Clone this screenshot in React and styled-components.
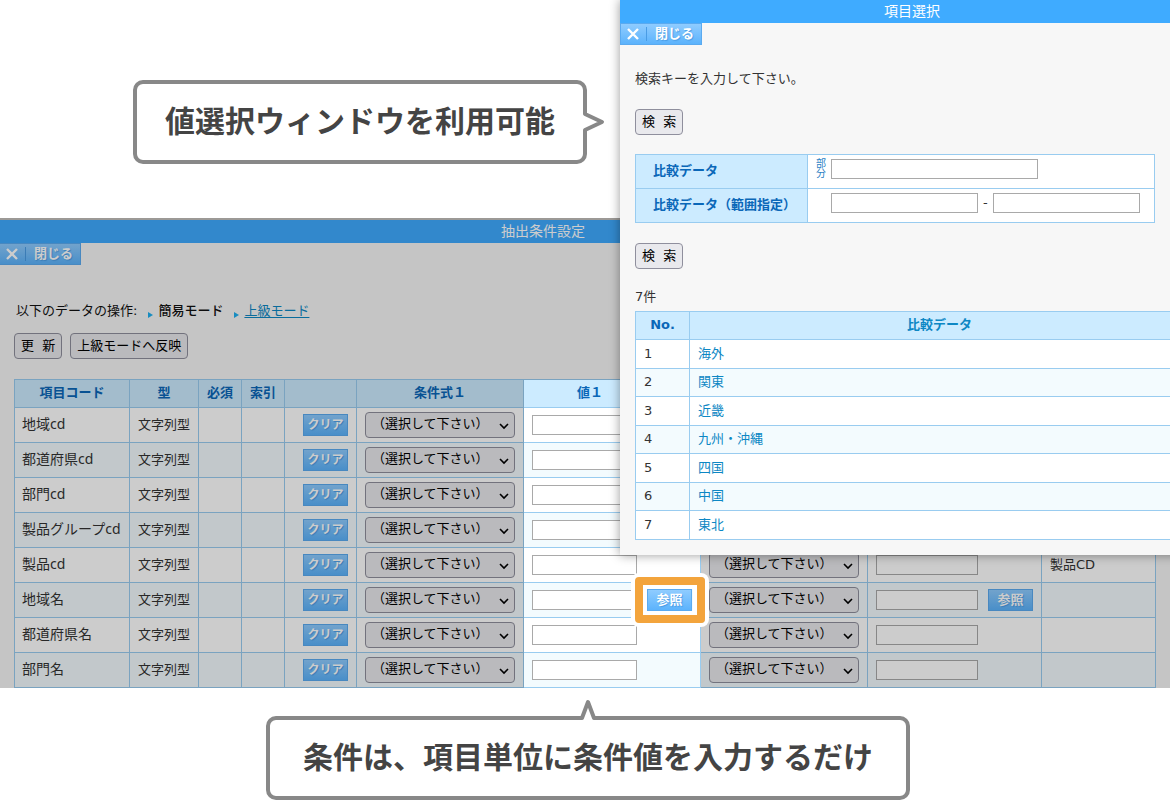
import React from 'react';
import styled, { createGlobalStyle, css } from 'styled-components';

const GlobalStyle = createGlobalStyle`
  *, *::before, *::after { box-sizing: border-box; }
  body {
    margin: 0;
    background: #fff;
    color: #333;
    font-family: "DejaVu Sans", "Noto Sans CJK JP", sans-serif;
    font-size: 13px;
    line-height: 20px;
  }
  button, input, select { font: inherit; }
`;

const color = {
  bar: '#3fabff',
  page: '#f7f7f7',
  line: '#99ccf0',
  head: '#ccebff',
  stripe: '#f3fbfe',
  heading: '#0a67b8',
  link: '#0d87c4',
  bubble: '#888',
};

const Page = styled.main`
  position: relative;
  overflow: hidden;
`;

/* Speech bubbles */
const TopNote = styled.div`
  display: flex;
  padding: 80px 0 54px 133px;
`;

const BottomNote = styled.div`
  display: flex;
  justify-content: center;
  padding: 28px 0 0 6px;
`;

const Bubble = styled.p`
  position: relative;
  margin: 0;
  height: 84px;
  padding: 0 ${(p) => (p.$wide ? 33 : 28)}px;
  border: 4px solid ${color.bubble};
  border-radius: 10px;
  background: #fff;
  color: #444;
  font-family: "Noto Sans CJK JP", sans-serif;
  font-size: 30px;
  font-weight: 700;
  line-height: 71px;
  white-space: nowrap;
`;

const Tail = styled.svg`
  position: absolute;
  overflow: visible;
  ${(p) =>
    p.$side === 'right'
      ? css`
          left: 100%;
          top: 26px;
        `
      : css`
          left: calc(50% - 12px);
          bottom: 100%;
        `}
`;

/* Windows */
const Window = styled.section`
  position: relative;
  isolation: isolate;
  background: ${color.page};
`;

const SettingsWindow = styled(Window)`
  border-top: 2px solid #c4c0bc;
`;

const Shade = styled.div`
  position: absolute;
  inset: -2px 0 0;
  z-index: 1;
  background: rgba(0, 0, 0, 0.2);
  pointer-events: none;
`;

const PickerWindow = styled(Window)`
  position: absolute;
  top: 0;
  left: 53%;
  right: -34px;
  z-index: 3;
  padding-bottom: 15px;
  box-shadow: 0 0 10px rgba(0, 0, 0, 0.4);
`;

const TitleBar = styled.h2`
  margin: 0;
  height: 23px;
  padding-right: ${(p) => (p.$offset ? 84 : 0)}px;
  background: ${color.bar};
  color: #fff;
  font-size: 14px;
  font-weight: 400;
  line-height: 22px;
  text-align: center;
`;

const glossy = css`
  border: 1px solid #5aaaf0;
  background: linear-gradient(#8fccff, #5cb3fc);
  color: #fff;
  font-weight: 700;
  text-shadow: 1px 1px 1px #4a9ce4;
  white-space: nowrap;
`;

const CloseButton = styled.button`
  ${glossy}
  display: flex;
  align-items: center;
  width: 82px;
  height: 22px;
  margin-left: ${(p) => (p.$flush ? -1 : 0)}px;
  padding: 0 0 0 6px;
  line-height: 18px;
`;

const CloseLabel = styled.span`
  margin-left: 7px;
  padding-left: 8px;
  border-left: 1px solid #4a9ce4;
  line-height: 14px;
`;

const MiniButton = styled.button`
  ${glossy}
  position: relative;
  flex: none;
  width: 45px;
  height: 22px;
  padding: 0;
  font-size: ${(p) => (p.$small ? 12 : 13)}px;
  line-height: 18px;
  ${(p) =>
    p.$marked &&
    css`
      &::after {
        content: '';
        position: absolute;
        inset: -13px -14px -13px -13px;
        border: 8px solid #f3a43c;
        border-radius: 4px;
        box-shadow: 0 0 0 4px #fff, inset 0 0 0 4px #fff;
      }
    `}
`;

const PlainButton = styled.button`
  height: 26px;
  padding: 0 6px;
  border: 1px solid #8f8f9d;
  border-radius: 4px;
  background: #e9e9ed;
  color: #000;
  line-height: 22px;
  white-space: pre;
`;

/* Settings window */
const SettingsBody = styled.div`
  padding: 36px 14px 0;
`;

const ModeLine = styled.div`
  display: flex;
  align-items: center;
  padding-left: 2px;
  color: #111;
`;

const ModeItem = styled.span`
  display: flex;
  align-items: center;
  gap: 5px;
  margin-left: 11px;
  font-weight: ${(p) => (p.$current ? 500 : 400)};
`;

const Marker = styled.svg`
  margin-top: 8px;
`;

const Link = styled.a`
  color: ${color.link};
  text-decoration: ${(p) => (p.$underlined ? 'underline' : 'none')};
  text-underline-offset: 2px;
`;

const ButtonRow = styled.div`
  display: flex;
  gap: 8px;
  padding: 12px 0 20px;
`;

const Grid = styled.table`
  width: ${(p) => p.$width || '100%'};
  table-layout: fixed;
  border-collapse: separate;
  border-spacing: 0;
  border: solid ${color.line};
  border-width: 1px 0 0 1px;
`;

const Head = styled.th`
  height: ${(p) => p.$height || 28}px;
  padding: ${(p) => p.$pad || '0 0 2px'};
  border: solid ${color.line};
  border-width: 0 1px 1px 0;
  background: ${color.head};
  color: ${(p) => (p.$link ? color.link : color.heading)};
  font-weight: 700;
  text-align: ${(p) => p.$align || 'center'};
  white-space: nowrap;
  ${(p) => p.$lit && 'position: relative; z-index: 2;'}
`;

const Row = styled.tr`
  background: #fff;
  &:nth-child(even) { background: ${color.stripe}; }
`;

const Cell = styled.td`
  height: 35px;
  padding: 0 0 0 8px;
  border: solid ${color.line};
  border-width: 0 1px 1px 0;
  background: inherit;
  white-space: nowrap;
  ${(p) => p.$lit && `position: relative; z-index: ${p.$raised ? 3 : 2};`}
`;

const NameCell = styled(Cell)`
  padding: 0 0 2px 7px;
  font-family: "Noto Sans", "Noto Sans CJK JP", sans-serif;
  font-size: 14px;
`;

const ClearCell = styled(Cell)`
  padding: 0 8px 0 0;
  text-align: right;
`;

const Inline = styled.div`
  display: flex;
  align-items: center;
  gap: 10px;
`;

const TextBox = styled.input`
  display: block;
  width: ${(p) => p.$width}px;
  height: 20px;
  padding: 0 4px;
  border: 1px solid #a9a9a9;
  background: #fff;
`;

const SelectBox = styled.div`
  position: relative;
  width: 150px;
  height: 26px;
`;

const Select = styled.select`
  appearance: none;
  width: 100%;
  height: 100%;
  padding: 0 20px 2px 6px;
  border: 1px solid #8f8f9d;
  border-radius: 4px;
  background: #e9e9ed;
  color: #000;
`;

const Chevron = styled.svg`
  position: absolute;
  top: 11px;
  right: 6px;
  pointer-events: none;
`;

/* Picker window */
const PickerBody = styled.div`
  padding: 24px 14px 0 15px;
`;

const Message = styled.p`
  margin: 0 0 20px;
`;

const FormTable = styled(Grid)`
  margin: 19px 0 20px;
`;

const FormCell = styled(Cell)`
  height: 34px;
  padding: 0 0 5px 8px;
  background: #fff;
`;

const FormFields = styled.div`
  display: flex;
  align-items: center;
  gap: 5px;
`;

const Match = styled.span`
  width: 10px;
  color: #2a7fc4;
  font-size: 10px;
  line-height: 10px;
  white-space: normal;
`;

const Count = styled.p`
  margin: 18px 0 4px;
`;

const ResultRow = styled(Row)`
  &:nth-child(odd) td { height: 29px; }
  &:nth-child(even) td { height: 28px; }
`;

const ResultCell = styled(Cell)`
  padding-bottom: 1px;
`;

const rows = [
  { name: '地域cd' },
  { name: '都道府県cd' },
  { name: '部門cd' },
  { name: '製品グループcd' },
  { name: '製品cd', note: '製品CD' },
  { name: '地域名', lookup: true },
  { name: '都道府県名' },
  { name: '部門名' },
];

const results = ['海外', '関東', '近畿', '九州・沖縄', '四国', '中国', '東北'];

const widths = [115, 69, 43, 43, 72, 167, 177, 167, 174, 114];

function Condition({ label }) {
  return (
    <SelectBox>
      <Select aria-label={label}>
        <option>（選択して下さい）</option>
      </Select>
      <Chevron width="10" height="7" viewBox="0 0 10 7" fill="none" stroke="#000" strokeWidth="1.6">
        <path d="M1 1L5 5L9 1" />
      </Chevron>
    </SelectBox>
  );
}

function Close({ flush }) {
  return (
    <CloseButton type="button" $flush={flush}>
      <svg width="12" height="12" viewBox="0 0 12 12" fill="none" stroke="#fff" strokeWidth="2.4">
        <path d="M1 1L11 11M11 1L1 11" />
      </svg>
      <CloseLabel>閉じる</CloseLabel>
    </CloseButton>
  );
}

function ModeMarker() {
  return (
    <Marker width="5" height="6" viewBox="0 0 5 6">
      <path d="M0 0L5 3L0 6Z" fill="#1fb0f0" />
    </Marker>
  );
}

function Settings() {
  return (
    <SettingsWindow>
      <TitleBar $offset>抽出条件設定</TitleBar>
      <Close flush />
      <SettingsBody>
        <ModeLine>
          以下のデータの操作:
          <ModeItem $current><ModeMarker />簡易モード</ModeItem>
          <ModeItem><ModeMarker /><Link $underlined href="#advanced">上級モード</Link></ModeItem>
        </ModeLine>
        <ButtonRow>
          <PlainButton type="button">{'更\u00a0\u00a0新'}</PlainButton>
          <PlainButton type="button">上級モードへ反映</PlainButton>
        </ButtonRow>
        <Grid>
          <colgroup>{widths.map((w, i) => <col key={i} width={w} />)}</colgroup>
          <thead>
            <tr>
              <Head>項目コード</Head>
              <Head>型</Head>
              <Head>必須</Head>
              <Head>索引</Head>
              <Head />
              <Head>条件式１</Head>
              <Head $lit $pad="0 44px 2px 0">値１</Head>
              <Head>条件式２</Head>
              <Head>値２</Head>
              <Head>備考</Head>
            </tr>
          </thead>
          <tbody>
            {rows.map((r) => (
              <Row key={r.name}>
                <NameCell>{r.name}</NameCell>
                <Cell>文字列型</Cell>
                <Cell />
                <Cell />
                <ClearCell><MiniButton type="button" $small>クリア</MiniButton></ClearCell>
                <Cell><Condition label={`${r.name} 条件式１`} /></Cell>
                <Cell $lit $raised={r.lookup}>
                  <Inline>
                    <TextBox $width={105} aria-label={`${r.name} 値１`} />
                    {r.lookup && <MiniButton type="button" $marked>参照</MiniButton>}
                  </Inline>
                </Cell>
                <Cell><Condition label={`${r.name} 条件式２`} /></Cell>
                <Cell>
                  <Inline>
                    <TextBox $width={102} aria-label={`${r.name} 値２`} />
                    {r.lookup && <MiniButton type="button">参照</MiniButton>}
                  </Inline>
                </Cell>
                <Cell>{r.note}</Cell>
              </Row>
            ))}
          </tbody>
        </Grid>
      </SettingsBody>
      <Shade />
    </SettingsWindow>
  );
}

function Picker() {
  return (
    <PickerWindow>
      <TitleBar>項目選択</TitleBar>
      <Close />
      <PickerBody>
        <Message>検索キーを入力して下さい。</Message>
        <PlainButton type="button">{'検\u00a0\u00a0索'}</PlainButton>
        <FormTable $width="520px">
          <colgroup><col width="172" /><col /></colgroup>
          <tbody>
            <tr>
              <Head scope="row" $height={34} $align="left" $pad="0 0 1px 17px">
                <label htmlFor="compare">比較データ</label>
              </Head>
              <FormCell>
                <FormFields>
                  <Match>部分</Match>
                  <TextBox id="compare" $width={207} />
                </FormFields>
              </FormCell>
            </tr>
            <tr>
              <Head scope="row" $height={34} $align="left" $pad="0 0 1px 17px">
                <label htmlFor="from">比較データ（範囲指定）</label>
              </Head>
              <FormCell>
                <FormFields>
                  <Match />
                  <TextBox id="from" $width={147} />
                  -
                  <TextBox aria-label="範囲の終わり" $width={147} />
                </FormFields>
              </FormCell>
            </tr>
          </tbody>
        </FormTable>
        <PlainButton type="button">{'検\u00a0\u00a0索'}</PlainButton>
        <Count>7件</Count>
        <Grid>
          <colgroup><col width="54" /><col /></colgroup>
          <thead>
            <tr><Head>No.</Head><Head $link>比較データ</Head></tr>
          </thead>
          <tbody>
            {results.map((name, i) => (
              <ResultRow key={name}>
                <ResultCell>{i + 1}</ResultCell>
                <ResultCell><Link href="#pick">{name}</Link></ResultCell>
              </ResultRow>
            ))}
          </tbody>
        </Grid>
      </PickerBody>
    </PickerWindow>
  );
}

export default function App() {
  return (
    <Page>
      <GlobalStyle />
      <TopNote>
        <Bubble>
          値選択ウィンドウを利用可能
          <Tail $side="right" width="22" height="24" viewBox="0 0 22 24">
            <path d="M-1 4H2L19 12L2 20H-1Z" fill="#fff" />
            <path d="M2 2V4L19 12L2 20V22" fill="none" stroke={color.bubble} strokeWidth="4" strokeLinejoin="round" />
          </Tail>
        </Bubble>
      </TopNote>
      <Settings />
      <BottomNote>
        <Bubble $wide>
          条件は、項目単位に条件値を入力するだけ
          <Tail width="24" height="22" viewBox="0 0 24 22">
            <path d="M6 23V20L12 4L18 20V23Z" fill="#fff" />
            <path d="M4 20H6L12 4L18 20H20" fill="none" stroke={color.bubble} strokeWidth="4" strokeLinejoin="round" />
          </Tail>
        </Bubble>
      </BottomNote>
      <Picker />
    </Page>
  );
}
